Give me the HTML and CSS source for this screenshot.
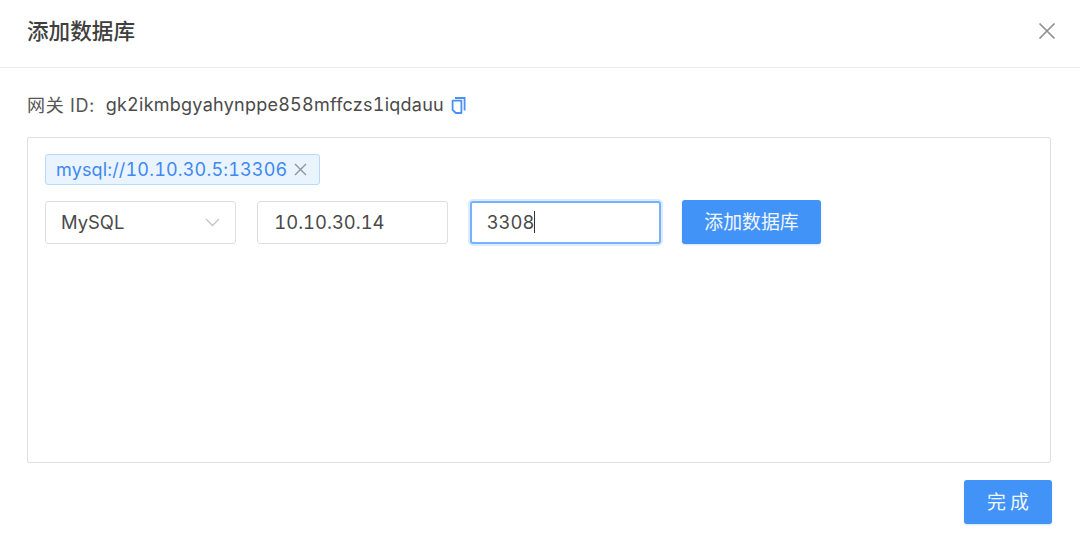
FILE: index.html
```html
<!DOCTYPE html>
<html lang="zh">
<head>
<meta charset="utf-8">
<title>添加数据库</title>
<link rel="stylesheet" href="styles.css">
</head>
<body>
<div class="dialog">
  <header class="head">
    <h1 class="title">添加数据库</h1>
    <svg class="close" width="18" height="18" viewBox="0 0 18 18"><path d="M1.5 1.5l15 15M16.5 1.5l-15 15" stroke="#8f8f8f" stroke-width="1.7" fill="none"/></svg>
  </header>
  <main class="body">
    <div class="gateway">
      <span class="label">网关 ID:</span>
      <span class="gid">gk2ikmbgyahynppe858mffczs1iqdauu</span>
      <svg class="copy" width="15" height="17" viewBox="0 0 15 17"><path d="M4 1h9.6v12.5" stroke="#4a90f5" stroke-width="1.8" fill="none"/><path d="M1.6 3.6h8.8v12.4H4.8L1.6 12.8z" stroke="#4a90f5" stroke-width="1.8" fill="none" stroke-linejoin="round"/></svg>
    </div>
    <section class="panel">
      <div class="tags">
        <span class="tag">mysql://10.10.30.5:13306
          <svg class="tag-x" width="13" height="13" viewBox="0 0 13 13"><path d="M1 1l11 11M12 1L1 12" stroke="#909399" stroke-width="1.4" fill="none"/></svg>
        </span>
      </div>
      <div class="row">
        <div class="field select">MySQL
          <svg class="chev" width="15" height="9" viewBox="0 0 15 9"><path d="M1 1l6.5 6.5L14 1" stroke="#c0c4cc" stroke-width="1.3" fill="none"/></svg>
        </div>
        <div class="field">10.10.30.14</div>
        <div class="field focus"><span class="val">3308</span><i class="caret"></i></div>
        <button class="btn add">添加数据库</button>
      </div>
    </section>
    <div class="foot"><button class="btn done">完 成</button></div>
  </main>
</div>
</body>
</html>
```
FILE: styles.css
```css
* { box-sizing: border-box; }
html, body { margin: 0; height: 100%; background: #fff; }
body {
  font-family: Inter, "Noto Sans CJK SC", sans-serif;
  font-variant-numeric: tabular-nums;
  color: #4a4a4a;
  overflow: hidden;
}
.head {
  height: 68px;
  border-bottom: 1px solid #ececec;
  display: flex;
  align-items: center;
  justify-content: space-between;
  padding: 0 24px 9px 27px;
}
.title {
  margin: 0;
  font-size: 21.6px;
  font-weight: 500;
  color: #3f3f3f;
  font-family: "Noto Sans CJK SC", sans-serif;
}
.close { display: block; margin-top: 4px; }
.body { padding: 0 29px 0 27px; }
.gateway {
  height: 69px;
  padding-top: 3px;
  display: flex;
  align-items: center;
  font-size: 18px;
}
.label { margin-right: 11px; color: #555; letter-spacing: .7px; }
.gid { color: #4a4a4a; letter-spacing: .25px; }
.copy { margin: 2px 0 0 7px; }
.panel {
  height: 326px;
  border: 1px solid #dfdfdf;
  border-radius: 2px;
  padding: 16px 17px;
}
.tags { display: flex; height: 47px; align-items: flex-start; }
.tag {
  height: 31px;
  width: 275px;
  display: flex;
  align-items: center;
  justify-content: space-between;
  padding: 0 12px 0 10px;
  background: #e9f4ff;
  border: 1px solid #b5dafc;
  border-radius: 3px;
  color: #4089f0;
  font-size: 18px;
  letter-spacing: .15px;
}
.row { display: flex; align-items: center; height: 44px; margin-top: -1px; }
.field {
  width: 191px;
  height: 43px;
  margin-right: 21.33px;
  border: 1.5px solid #dedede;
  border-radius: 3px;
  padding-left: 16px;
  display: flex;
  align-items: center;
  font-size: 18.4px;
  color: #4a4a4a;
  background: #fff;
}
.select { justify-content: space-between; padding: 0 15px; }
.focus {
  border: 2px solid #74b3fb;
  box-shadow: 0 0 0 2px #dcecfe;
  padding-left: 15px;
}
.caret { width: 1px; height: 22px; background: #333; margin-left: 0; }
.btn {
  border: 0;
  border-radius: 3px;
  background: #4293f8;
  color: #f2f7ff;
  font-family: "Noto Sans CJK SC", sans-serif;
  font-size: 18.9px;
  height: 44px;
  padding: 0 0 3px;
  box-shadow: 0 1px 2px rgba(66, 147, 248, .25);
}
.add { width: 139px; }
.foot { display: flex; justify-content: flex-end; padding-top: 17px; margin-right: -1px; }
.done { width: 88px; white-space: pre; }
```
